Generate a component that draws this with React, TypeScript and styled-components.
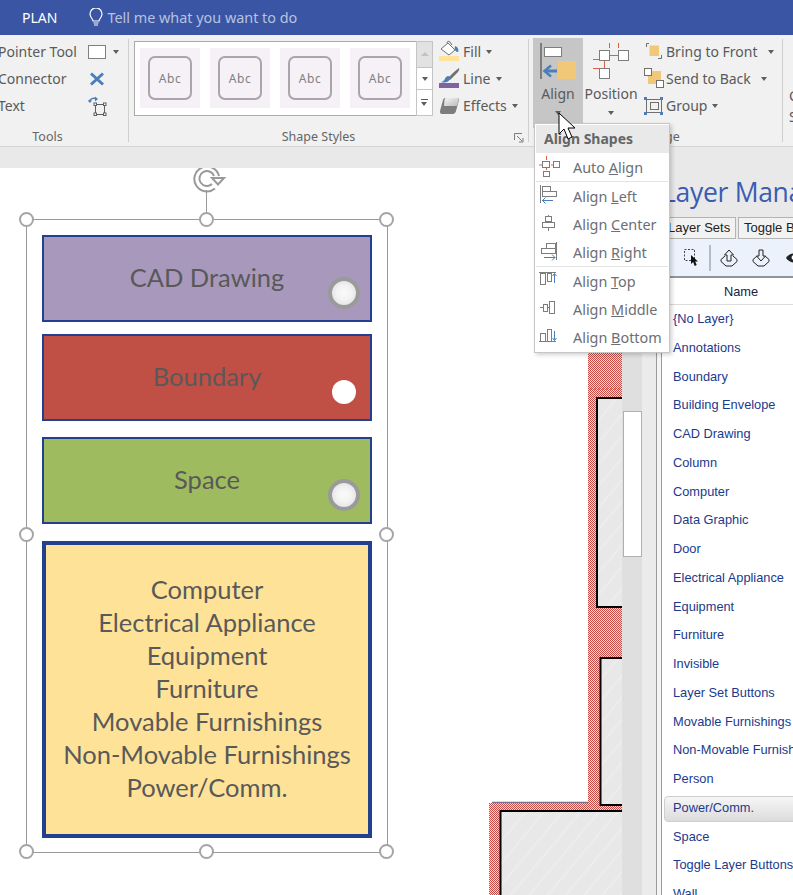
import React from "react";
import styled, { createGlobalStyle } from "styled-components";

const Global = createGlobalStyle`
  html, body { margin: 0; padding: 0; background: #fff; }
  * { box-sizing: border-box; }
`;

const UI = `"Noto Sans", "Open Sans", sans-serif`;

const Page = styled.div`
  position: relative;
  width: 793px;
  height: 895px;
  overflow: hidden;
  display: flex;
  flex-direction: column;
  font-family: ${UI};
  background: #e9e9e9;
`;

const TitleBar = styled.header`
  flex: none;
  height: 35px;
  background: #3955a3;
  display: flex;
  align-items: center;
  padding-left: 22px;
`;
const TabName = styled.span`
  color: #fff;
  font-size: 14px;
  margin-right: 32px;
`;
const TellMe = styled.span`
  color: #b7c3e0;
  font-size: 14.4px;
  margin-left: 4px;
`;

const Ribbon = styled.section`
  flex: none;
  height: 112px;
  background: #f1f1f1;
  border-bottom: 1px solid #d4d4d4;
  display: flex;
  color: #5a5a5a;
  font-size: 14px;
`;
const Group = styled.div<{ $w: number }>`
  position: relative;
  flex: none;
  width: ${(p) => p.$w}px;
  height: 111px;
  display: flex;
  flex-direction: column;
`;
const Divider = styled.i`
  position: absolute;
  right: 0;
  top: 4px;
  bottom: 4px;
  width: 1px;
  background: #cfcfcf;
`;
const GroupBody = styled.div<{ $pl?: number }>`
  flex: 1;
  display: flex;
  padding-left: ${(p) => p.$pl ?? 0}px;
  min-height: 0;
`;
const GroupLabel = styled.div<{ $pr?: number }>`
  flex: none;
  height: 18px;
  line-height: 18px;
  font-size: 12.5px;
  color: #666;
  text-align: center;
  padding-right: ${(p) => p.$pr ?? 0}px;
`;
const RowStack = styled.div<{ $ml?: number }>`
  display: flex;
  flex-direction: column;
  padding-top: 3px;
  margin-left: ${(p) => p.$ml ?? 0}px;
`;
const ToolRow = styled.div`
  height: 27px;
  display: flex;
  align-items: center;
  white-space: nowrap;
`;
const ToolName = styled.span`
  width: 90px;
  margin-left: -2px;
`;
const Caret = styled.i<{ $ml?: number }>`
  display: inline-block;
  width: 0;
  height: 0;
  border-left: 3.5px solid transparent;
  border-right: 3.5px solid transparent;
  border-top: 4px solid #5e5e5e;
  margin-left: ${(p) => p.$ml ?? 5}px;
`;
const IconSlot = styled.span<{ $w: number }>`
  display: inline-flex;
  width: ${(p) => p.$w}px;
  flex: none;
  svg { display: block; overflow: visible; }
`;

const Gallery = styled.div`
  flex: none;
  width: 299px;
  height: 75px;
  margin-top: 6px;
  background: #fff;
  border: 1px solid #ababab;
  display: flex;
  padding: 6px 0 0 5px;
  position: relative;
`;
const StyleTile = styled.div`
  width: 60px;
  height: 60px;
  margin-right: 10px;
  background: #f5f1f7;
  display: flex;
  align-items: center;
  justify-content: center;
`;
const StyleInner = styled.div`
  width: 44px;
  height: 44px;
  border: 2px solid #a8a6a8;
  border-radius: 7px;
  display: flex;
  align-items: center;
  justify-content: center;
  font-size: 12px;
  letter-spacing: 0.5px;
  color: #808080;
`;
const GalleryScroll = styled.div`
  position: absolute;
  right: -1px;
  top: -1px;
  bottom: -1px;
  width: 17px;
  display: flex;
  flex-direction: column;
  border: 1px solid #c4c4c4;
  background: #fff;
`;
const ScrollCell = styled.div<{ $h: number; $off?: boolean }>`
  height: ${(p) => p.$h}px;
  border-bottom: 1px solid #c4c4c4;
  background: ${(p) => (p.$off ? "#e2e2e2" : "#fff")};
  display: flex;
  align-items: center;
  justify-content: center;
  &:last-child { border-bottom: 0; }
`;
const UpCaret = styled.i`
  width: 0;
  height: 0;
  border-left: 4px solid transparent;
  border-right: 4px solid transparent;
  border-bottom: 4px solid #c2c2c2;
`;
const MoreCaret = styled.i`
  width: 7px;
  border-top: 1px solid #5e5e5e;
  padding-top: 2px;
  display: flex;
  &::after {
    content: "";
    border-left: 3.5px solid transparent;
    border-right: 3.5px solid transparent;
    border-top: 4px solid #5e5e5e;
  }
`;
const Launcher = styled.span`
  position: absolute;
  left: 385px;
  top: 98px;
  svg { display: block; }
`;

const BigButton = styled.div<{ $w: number; $active?: boolean; $ml?: number }>`
  flex: none;
  width: ${(p) => p.$w}px;
  height: 90px;
  margin-top: 3px;
  margin-left: ${(p) => p.$ml ?? 0}px;
  background: ${(p) => (p.$active ? "#c6c6c6" : "transparent")};
  display: flex;
  flex-direction: column;
  align-items: center;
`;
const BigIcon = styled.div`
  height: 45px;
  width: 100%;
  svg { display: block; }
`;
const BigText = styled.div`
  height: 22px;
  line-height: 22px;
  margin-top: 0;
`;
const BigCaretRow = styled.div`
  height: 16px;
  display: flex;
  align-items: center;
  justify-content: center;
  i { margin-left: 0; }
`;
const ClippedCommand = styled.div`
  flex: none;
  width: 40px;
  padding: 50px 0 0 6px;
  line-height: 21px;
  white-space: nowrap;
`;

const Strip = styled.div`
  flex: none;
  height: 21px;
  background: #e9e9e9;
`;

const Workspace = styled.main`
  flex: 1;
  min-height: 0;
  display: flex;
`;
const Canvas = styled.div`
  position: relative;
  flex: none;
  width: 622px;
  background: #fff;
  overflow: hidden;
  padding: 51px 0 0 26px;
`;
const FloorPlan = styled.svg`
  position: absolute;
  left: 480px;
  top: 184px;
  display: block;
`;
const Selection = styled.div`
  position: relative;
  width: 362px;
  height: 634px;
  border: 1px solid #999;
  padding: 15px 0 0 15px;
`;
const Handle = styled.i<{ $x: string; $y: string }>`
  position: absolute;
  left: ${(p) => p.$x};
  top: ${(p) => p.$y};
  width: 15px;
  height: 15px;
  margin: -8px 0 0 -8px;
  border-radius: 50%;
  border: 2px solid #a5a5a5;
  background: #fff;
`;
const RotateStem = styled.i`
  position: absolute;
  left: calc(50% - 1px);
  top: -30px;
  height: 30px;
  width: 1px;
  background: #999;
`;
const RotateIcon = styled.span`
  position: absolute;
  left: 50%;
  top: -56px;
  margin-left: -14px;
  svg { display: block; overflow: visible; }
`;
const Card = styled.div<{ $bg: string; $h: number; $bw: number; $mt: number }>`
  position: relative;
  width: 330px;
  height: ${(p) => p.$h}px;
  margin-top: ${(p) => p.$mt}px;
  padding-bottom: 3px;
  background: ${(p) => p.$bg};
  border: ${(p) => p.$bw}px solid #233f8f;
  display: flex;
  align-items: center;
  justify-content: center;
  text-align: center;
  font-family: "Lato", "Open Sans", sans-serif;
  font-size: 25.5px;
  line-height: 33px;
  color: #595959;
`;
const CardLine = styled.div``;
const Toggle = styled.i<{ $on?: boolean }>`
  position: absolute;
  left: ${(p) => (p.$on ? 288 : 284)}px;
  bottom: ${(p) => (p.$on ? 15 : 11)}px;
  border-radius: 50%;
  ${(p) =>
    p.$on
      ? `width: 24px; height: 24px; background: #fff;`
      : `width: 32px; height: 32px; border: 4px solid #9a9a9a;
         background: radial-gradient(circle at 50% 50%, #fafafa 0%, #f2f2f2 45%, #d8d8d8 100%);`}
`;

const ScrollTrack = styled.div`
  flex: none;
  width: 20px;
  background: #dfdfdf;
  padding: 243px 0 0 1px;
`;
const ScrollThumb = styled.div`
  height: 146px;
  background: #fff;
  border: 1px solid #b0b0b0;
`;
const Gutter = styled.div`
  flex: none;
  width: 15px;
  background: #ebebeb;
  border-right: 1px solid #9a9a9a;
`;
const PanelEdge = styled.div`
  flex: none;
  width: 5px;
  background: #f5f5f5;
  border-right: 1px solid #9a9a9a;
`;
const Panel = styled.aside`
  flex: 1;
  min-width: 0;
  overflow: hidden;
  display: flex;
  flex-direction: column;
  font-family: "Liberation Sans", Arial, sans-serif;
  background: #fff;
`;
const PanelTitle = styled.h1`
  flex: none;
  margin: 0;
  height: 49px;
  background: #e9e9e9;
  font-family: "Open Sans", sans-serif;
  font-weight: 400;
  font-size: 26.5px;
  letter-spacing: -0.3px;
  line-height: 48px;
  color: #3a5cb4;
  white-space: nowrap;
`;
const TabRow = styled.div`
  flex: none;
  height: 22px;
  background: #e9e9e9;
  display: flex;
  white-space: nowrap;
`;
const PanelTab = styled.div<{ $w: number }>`
  flex: none;
  width: ${(p) => p.$w}px;
  margin-right: 2px;
  border: 1px solid #b4b4b4;
  background: #f2f2f2;
  padding-left: 5px;
  font-size: 13px;
  line-height: 20px;
  color: #222;
`;
const PanelBar = styled.div`
  flex: none;
  height: 39px;
  background: #ebf2fb;
  border-bottom: 2px solid #8f959c;
  display: flex;
  align-items: center;
  padding-left: 21px;
  svg { display: block; flex: none; overflow: visible; }
`;
const BarSep = styled.i`
  flex: none;
  width: 2px;
  height: 26px;
  background: #b6bcc4;
  margin: 0 9px 0 11px;
`;
const BarGap = styled.span<{ $w: number }>`
  flex: none;
  width: ${(p) => p.$w}px;
`;
const ColHead = styled.div`
  flex: none;
  width: 158px;
  height: 26px;
  line-height: 28px;
  text-align: center;
  font-size: 12.8px;
  color: #15233f;
`;
const List = styled.div`
  flex: 1;
  min-height: 0;
  border-top: 1px solid #dcdcdc;
  width: 100%;
`;
const Row = styled.div<{ $sel?: boolean }>`
  height: 28.75px;
  line-height: 28.75px;
  font-size: 12.8px;
  color: #1b3a8c;
  white-space: nowrap;
  padding-left: 11px;
  position: relative;
  ${(p) =>
    p.$sel
      ? `background: linear-gradient(#f6f6f6, #dcdcdc);
         border: 1px solid #cfcfcf; border-radius: 4px;
         margin: 2px -10px 1px 2px; height: 25.75px; line-height: 22px; padding-left: 8px;`
      : ""}
`;

const Menu = styled.nav`
  position: absolute;
  left: 534px;
  top: 123px;
  width: 136px;
  height: 230px;
  background: #fff;
  border: 1px solid #c6c6c6;
  box-shadow: 2px 2px 4px rgba(0, 0, 0, 0.18);
  display: flex;
  flex-direction: column;
  color: #6c6e76;
`;
const MenuHead = styled.div`
  flex: none;
  height: 28px;
  margin: 1px 0 0 1px;
  background: #e9e9e9;
  padding-left: 8px;
  font-size: 14px;
  font-weight: 700;
  line-height: 28px;
  color: #666;
`;
const MenuItem = styled.div`
  height: 28px;
  flex: none;
  display: flex;
  align-items: center;
  font-size: 14.4px;
  white-space: nowrap;
`;
const MenuSep = styled.hr`
  flex: none;
  height: 1px;
  border: 0;
  background: #e3e3e3;
  margin: 0 1px;
`;
const MenuIcon = styled.span`
  flex: none;
  width: 38px;
  height: 22px;
  padding-left: 4px;
  svg { display: block; overflow: visible; }
`;
const Cursor = styled.svg`
  position: absolute;
  left: 558px;
  top: 112px;
  display: block;
  overflow: visible;
`;

const G = "#7d7d7d";
const B = "#4a7ebb";
const R = "#d9623c";
const Y = "#f0c878";

const Bulb = () => (
  <svg width="14" height="19" viewBox="0 0 14 19" fill="none" stroke="#fff" strokeWidth="1.2">
    <path d="M4 13c0-2-3-3.500-3-7a6 6 0 0 1 12 0c0 3.500-3 5-3 7z" />
    <path d="M4.500 15h5M5 17h4" />
  </svg>
);
const RectTool = () => (
  <svg width="18" height="14"><rect x=".5" y=".5" width="17" height="13" fill="#fff" stroke="#7f7f7f" /></svg>
);
const ConnectorTool = () => (
  <svg width="18" height="14" viewBox="0 0 18 14"><path d="M3 1.500 15 12.500M15 1.500 3 12.500" stroke={B} strokeWidth="3" /></svg>
);
const TransformTool = () => (
  <svg width="20" height="20" viewBox="0 0 20 20" fill="none">
    <path d="M1 6c1-3 4-5 8-3" stroke={B} strokeWidth="1.400" />
    <path d="M7 0.500 10 3 7 5.500z M0 4l2 3 2-2.500z" fill={B} />
    <rect x="7.500" y="8.500" width="9" height="10" stroke="#5e5e5e" />
    <g fill="#fff" stroke="#5e5e5e">
      <rect x="6" y="7" width="2.500" height="2.500" /><rect x="15.500" y="7" width="2.500" height="2.500" />
      <rect x="6" y="17" width="2.500" height="2.500" /><rect x="15.500" y="17" width="2.500" height="2.500" />
    </g>
  </svg>
);
const FillIcon = () => (
  <svg width="21" height="21" viewBox="0 0 21 21">
    <rect x="0" y="15" width="20" height="5" fill="#ffe399" />
    <path d="M2 8 9 2l7 7-6 5z" fill="#fff" stroke="#6f6f6f" />
    <path d="M8 2c0-2 2-2 3-1l2 3" fill="none" stroke="#6f6f6f" />
    <path d="M16 5c3 1 4 4 3 6-2 0-4-2-3-6z" fill={B} />
  </svg>
);
const LineIcon = () => (
  <svg width="21" height="21" viewBox="0 0 21 21">
    <rect x="0" y="15" width="20" height="5" fill="#8064a2" />
    <path d="M20 0c1 2-1 4-3 6l-6 6-2-2 6-6z" fill="#6f6f6f" />
    <path d="M10 8c-3 0-4 2-4 3-1 2-3 3-4 3 3 1 7 1 9-3z" fill={B} />
  </svg>
);
const EffectsIcon = () => (
  <svg width="21" height="20" viewBox="0 0 21 20">
    <defs>
      <linearGradient id="fx" x1="0" y1="0" x2="1" y2="1"><stop offset="0" stopColor="#f4f4f4" /><stop offset="1" stopColor="#bdbdbd" /></linearGradient>
    </defs>
    <path d="M6 2h12c2 0 2 1 2 2l-3 11c-.4 2-2 3-3 3H3c-2 0-2-2-2-3L4 4c.3-1 1-2 2-2z" fill="#7d7d7d" />
    <path d="M7 2h11c1 0 2 .5 1.600 2l-1.600 6H5l.5-6c.2-1 .5-2 1.500-2z" fill="url(#fx)" />
  </svg>
);
const LauncherIcon = () => (
  <svg width="10" height="10" fill="none" stroke="#7d7d7d"><path d="M.5 7V.5H8" /><path d="M3 3l5 5M9 5v4H5" /></svg>
);
const AlignBig = () => (
  <svg width="50" height="45" viewBox="533 38 50 45">
    <rect x="540" y="43" width="2" height="36" fill={G} />
    <rect x="544.500" y="47.500" width="17" height="9" fill="#fff" stroke={G} />
    <rect x="558" y="61" width="18" height="18" fill={Y} />
    <path d="M545 71h12" stroke={B} strokeWidth="3" />
    <path d="M551 65.500 544.500 71l6.500 5.500" fill="none" stroke={B} strokeWidth="2.500" />
  </svg>
);
const PositionBig = () => (
  <svg width="52" height="45" viewBox="585 38 52 45" fill="none">
    <path d="M609.500 43v5M618.500 43v5M593 59.500h6M593 68.500h6M604.500 60v8M610 55.500h8" stroke={R} />
    <rect x="599.500" y="50.500" width="10" height="10" fill="#fff" stroke={G} />
    <rect x="618.500" y="50.500" width="10" height="10" fill="#fff" stroke={G} />
    <rect x="599.500" y="68.500" width="10" height="10" fill="#fff" stroke={G} />
  </svg>
);
const FrontIcon = () => (
  <svg width="20" height="18" viewBox="0 0 20 18" fill="none">
    <path d="M5 .5H2.500V4M14 15.500H17.500V12" stroke="#6f6f6f" />
    <path d="M5.500 2.500H15V13H5.500z" fill={Y} />
  </svg>
);
const BackIcon = () => (
  <svg width="20" height="21" viewBox="0 0 20 21">
    <rect x="4" y="3" width="13" height="13" fill={Y} />
    <rect x=".5" y=".5" width="7" height="7" fill="#fff" stroke="#6f6f6f" />
    <rect x="12.500" y="12.500" width="7" height="7" fill="#fff" stroke="#6f6f6f" />
  </svg>
);
const GroupIcon = () => (
  <svg width="20" height="18" viewBox="0 0 20 18" fill="none">
    <rect x="2.500" y="2.500" width="15" height="13" stroke="#6f6f6f" />
    <rect x="6.500" y="5.500" width="8" height="7" stroke="#6f6f6f" />
    <g fill={B}>
      <rect x="0" y="0" width="3" height="3" /><rect x="16" y="0" width="3" height="3" />
      <rect x="0" y="15" width="3" height="3" /><rect x="16" y="15" width="3" height="3" />
    </g>
  </svg>
);
const RotateGlyph = () => (
  <svg width="32" height="28" viewBox="0 0 32 28" fill="none" stroke="#999" strokeWidth="2">
    <path d="M26 12A12.500 12.500 0 1 0 22 24.500" />
    <path d="M21 12A7.500 7.500 0 1 0 19 20" />
    <path d="M19 14H31L25 20.500z" fill="#fff" />
  </svg>
);
const SmallAuto = () => (
  <svg width="20" height="21" viewBox="0 0 20 21" fill="none">
    <path d="M7.500 0v4M0 9h3.500M7.500 14v-2M12 9h2" stroke={R} />
    <rect x="3.500" y="5.500" width="7" height="6" stroke={G} fill="#fff" />
    <rect x="14.500" y="5.500" width="6" height="6" stroke={G} fill="#fff" />
    <rect x="4.500" y="15.500" width="6" height="5" stroke={G} fill="#fff" />
  </svg>
);
const SmallLeft = () => (
  <svg width="20" height="20" viewBox="0 0 20 20" fill="none">
    <path d="M1.500 0v18" stroke={G} />
    <rect x="3.500" y="1.500" width="8" height="5" stroke={G} />
    <rect x="3.500" y="6.500" width="14" height="5" stroke={G} />
    <path d="M3 15.500h11M6.500 12.500l-3 3 3 3" stroke={B} />
  </svg>
);
const SmallCenter = () => (
  <svg width="20" height="20" viewBox="0 0 20 20" fill="none">
    <path d="M9.500 2v16" stroke={G} />
    <rect x="6.500" y="3.500" width="6" height="5" fill="#fff" stroke={G} />
    <rect x="3.500" y="9.500" width="12" height="5" fill="#fff" stroke={G} />
  </svg>
);
const SmallRight = () => (
  <svg width="20" height="20" viewBox="0 0 20 20" fill="none">
    <path d="M17.500 1v18" stroke={G} />
    <rect x="7.500" y="2.500" width="9" height="5" stroke={G} />
    <rect x="2.500" y="7.500" width="14" height="5" stroke={G} />
    <path d="M5 16.500h11M13 13.500l3 3-3 3" stroke={B} />
  </svg>
);
const SmallTop = () => (
  <svg width="20" height="20" viewBox="0 0 20 20" fill="none">
    <path d="M0 2.500h17" stroke={G} />
    <rect x="1.500" y="3.500" width="5" height="11" stroke={G} />
    <rect x="8.500" y="3.500" width="4" height="8" stroke={G} />
    <path d="M15.500 13V4M13.500 6l2-2.500 2 2.500" stroke={B} />
  </svg>
);
const SmallMiddle = () => (
  <svg width="20" height="20" viewBox="0 0 20 20" fill="none">
    <path d="M1 9.500h15" stroke={G} />
    <rect x="4.500" y="6.500" width="4" height="7" fill="#fff" stroke={G} />
    <rect x="10.500" y="3.500" width="5" height="12" fill="#fff" stroke={G} />
  </svg>
);
const SmallBottom = () => (
  <svg width="20" height="20" viewBox="0 0 20 20" fill="none">
    <path d="M0 15.500h17" stroke={G} />
    <rect x="1.500" y="7.500" width="5" height="8" stroke={G} />
    <rect x="8.500" y="3.500" width="4" height="12" stroke={G} />
    <path d="M15.500 5v9M13.500 12l2 2.500 2-2.500" stroke={B} />
  </svg>
);
const SelectGlyph = () => (
  <svg width="15" height="18" viewBox="0 0 15 18" fill="none">
    <rect x="1.500" y=".5" width="10" height="11" stroke="#444" strokeDasharray="2 1.500" />
    <path d="M8 6v9l2.200-2 1.500 4 2-1-1.500-3.500H15z" fill="#111" />
  </svg>
);
const ExportGlyph = ({ down }: { down?: boolean }) => (
  <svg width="18" height="18" viewBox="0 0 18 18" fill="none" stroke="#222">
    <path d="M5 7 1 10.500v2L6 17h6l5-4.500v-2L13 7" />
    {down ? (
      <path d="M7 1h4v6h2.500L9 12 4.500 7H7z" fill="#ebf2fb" />
    ) : (
      <path d="M7 12V6H4.500L9 1l4.500 5H11v6z" fill="#ebf2fb" />
    )}
  </svg>
);
const EyeGlyph = () => (
  <svg width="16" height="10" viewBox="0 0 16 10">
    <path d="M0 5c4-6 12-6 16 0-4 6-12 6-16 0z" fill="#222" />
    <circle cx="8" cy="4.500" r="2.400" fill="#fff" />
  </svg>
);

const layers = [
  "{No Layer}", "Annotations", "Boundary", "Building Envelope", "CAD Drawing", "Column", "Computer",
  "Data Graphic", "Door", "Electrical Appliance", "Equipment", "Furniture", "Invisible", "Layer Set Buttons",
  "Movable Furnishings", "Non-Movable Furnishings", "Person", "Power/Comm.", "Space", "Toggle Layer Buttons", "Wall",
];
const yellowLines = [
  "Computer", "Electrical Appliance", "Equipment", "Furniture", "Movable Furnishings",
  "Non-Movable Furnishings", "Power/Comm.",
];
const handles: [string, string][] = [
  ["0%", "0%"], ["50%", "0%"], ["100%", "0%"], ["0%", "49.9%"], ["100%", "49.9%"],
  ["0%", "100%"], ["50%", "100%"], ["100%", "100%"],
];

export default function App() {
  return (
    <Page>
      <Global />
      <TitleBar>
        <TabName>PLAN</TabName>
        <Bulb />
        <TellMe>Tell me what you want to do</TellMe>
      </TitleBar>

      <Ribbon>
        <Group $w={129}>
          <GroupBody>
            <RowStack>
              <ToolRow><ToolName>Pointer Tool</ToolName><RectTool /><Caret $ml={7} /></ToolRow>
              <ToolRow><ToolName>Connector</ToolName><ConnectorTool /></ToolRow>
              <ToolRow><ToolName>Text</ToolName><TransformTool /></ToolRow>
            </RowStack>
          </GroupBody>
          <GroupLabel $pr={34}>Tools</GroupLabel>
          <Divider />
        </Group>

        <Group $w={400}>
          <GroupBody $pl={5}>
            <Gallery>
              {[0, 1, 2, 3].map((i) => (
                <StyleTile key={i}><StyleInner>Abc</StyleInner></StyleTile>
              ))}
              <GalleryScroll>
                <ScrollCell $h={26} $off><UpCaret /></ScrollCell>
                <ScrollCell $h={23}><Caret $ml={0} /></ScrollCell>
                <ScrollCell $h={25}><MoreCaret /></ScrollCell>
              </GalleryScroll>
            </Gallery>
            <RowStack $ml={6}>
              <ToolRow><IconSlot $w={24}><FillIcon /></IconSlot>Fill<Caret /></ToolRow>
              <ToolRow><IconSlot $w={24}><LineIcon /></IconSlot>Line<Caret /></ToolRow>
              <ToolRow><IconSlot $w={24}><EffectsIcon /></IconSlot>Effects<Caret /></ToolRow>
            </RowStack>
          </GroupBody>
          <GroupLabel $pr={21}>Shape Styles</GroupLabel>
          <Launcher><LauncherIcon /></Launcher>
          <Divider />
        </Group>

        <Group $w={254}>
          <GroupBody $pl={4}>
            <BigButton $w={50} $active>
              <BigIcon><AlignBig /></BigIcon>
              <BigText>Align</BigText>
              <BigCaretRow><Caret $ml={0} /></BigCaretRow>
            </BigButton>
            <BigButton $w={52} $ml={2}>
              <BigIcon><PositionBig /></BigIcon>
              <BigText>Position</BigText>
              <BigCaretRow><Caret $ml={0} /></BigCaretRow>
            </BigButton>
            <RowStack $ml={7}>
              <ToolRow><IconSlot $w={22}><FrontIcon /></IconSlot>Bring to Front<Caret $ml={10} /></ToolRow>
              <ToolRow><IconSlot $w={22}><BackIcon /></IconSlot>Send to Back<Caret $ml={10} /></ToolRow>
              <ToolRow><IconSlot $w={22}><GroupIcon /></IconSlot>Group<Caret /></ToolRow>
            </RowStack>
          </GroupBody>
          <GroupLabel>Arrange</GroupLabel>
          <Divider />
        </Group>

        <ClippedCommand>Change<br />Shape</ClippedCommand>
      </Ribbon>

      <Strip />

      <Workspace>
        <Canvas>
          <FloorPlan width="142" height="543" viewBox="480 352 142 543">
            <defs>
              <pattern id="brick" width="2" height="2" patternUnits="userSpaceOnUse">
                <rect width="2" height="2" fill="#f8e0de" />
                <rect width="1" height="1" fill="#c94a44" />
                <rect x="1" y="1" width="1" height="1" fill="#c94a44" />
              </pattern>
              <pattern id="hatch" width="14" height="14" patternUnits="userSpaceOnUse" patternTransform="rotate(40)">
                <rect width="14" height="14" fill="#e8e8e8" />
                <rect width="1.500" height="14" fill="#eeeeee" />
              </pattern>
            </defs>
            <path d="M588 352H622V895H489V803H588Z" fill="url(#brick)" />
            <path d="M492 802.500H588" stroke="#7b6f8a" strokeWidth="1.500" />
            <path d="M590 389H622" stroke="#c8433c" strokeDasharray="2 2" />
            <path d="M630 398H597V607H630" fill="url(#hatch)" stroke="#000" strokeWidth="2" />
            <path d="M630 658H600.500V805H630" fill="url(#hatch)" stroke="#000" strokeWidth="2" />
            <path d="M630 811H500.500V900H630Z" fill="url(#hatch)" stroke="#000" strokeWidth="2" />
          </FloorPlan>
          <Selection>
            <RotateStem />
            <RotateIcon><RotateGlyph /></RotateIcon>
            {handles.map(([x, y]) => (
              <Handle key={x + y} $x={x} $y={y} />
            ))}
            <Card $bg="#a898bc" $h={87} $bw={2} $mt={0}>
              CAD Drawing
              <Toggle />
            </Card>
            <Card $bg="#c05046" $h={87} $bw={2} $mt={12}>
              Boundary
              <Toggle $on />
            </Card>
            <Card $bg="#9fbb60" $h={87} $bw={2} $mt={16}>
              Space
              <Toggle />
            </Card>
            <Card $bg="#fee298" $h={297} $bw={4} $mt={17}>
              <div>
                {yellowLines.map((l) => (
                  <CardLine key={l}>{l}</CardLine>
                ))}
              </div>
            </Card>
          </Selection>
        </Canvas>

        <ScrollTrack><ScrollThumb /></ScrollTrack>
        <Gutter />
        <PanelEdge />

        <Panel>
          <PanelTitle>Layer Manager</PanelTitle>
          <TabRow>
            <PanelTab $w={74}>Layer Sets</PanelTab>
            <PanelTab $w={110}>Toggle Buttons</PanelTab>
          </TabRow>
          <PanelBar>
            <SelectGlyph />
            <BarSep />
            <ExportGlyph />
            <BarGap $w={14} />
            <ExportGlyph down />
            <BarGap $w={16} />
            <EyeGlyph />
          </PanelBar>
          <ColHead>Name</ColHead>
          <List>
            {layers.map((l) => (
              <Row key={l} $sel={l === "Power/Comm."}>{l}</Row>
            ))}
          </List>
        </Panel>
      </Workspace>

      <Menu>
        <MenuHead>Align Shapes</MenuHead>
        <MenuItem><MenuIcon><SmallAuto /></MenuIcon><span>Auto <u>A</u>lign</span></MenuItem>
        <MenuSep />
        <MenuItem><MenuIcon><SmallLeft /></MenuIcon><span>Align <u>L</u>eft</span></MenuItem>
        <MenuItem><MenuIcon><SmallCenter /></MenuIcon><span>Align <u>C</u>enter</span></MenuItem>
        <MenuItem><MenuIcon><SmallRight /></MenuIcon><span>Align <u>R</u>ight</span></MenuItem>
        <MenuSep />
        <MenuItem><MenuIcon><SmallTop /></MenuIcon><span>Align <u>T</u>op</span></MenuItem>
        <MenuItem><MenuIcon><SmallMiddle /></MenuIcon><span>Align <u>M</u>iddle</span></MenuItem>
        <MenuItem><MenuIcon><SmallBottom /></MenuIcon><span>Align <u>B</u>ottom</span></MenuItem>
      </Menu>

      <Cursor width="18" height="28" viewBox="0 0 18 28">
        <path d="M1 1v21l5-5 4 10 4-2-4-9h7z" fill="#fff" stroke="#000" />
      </Cursor>
    </Page>
  );
}
